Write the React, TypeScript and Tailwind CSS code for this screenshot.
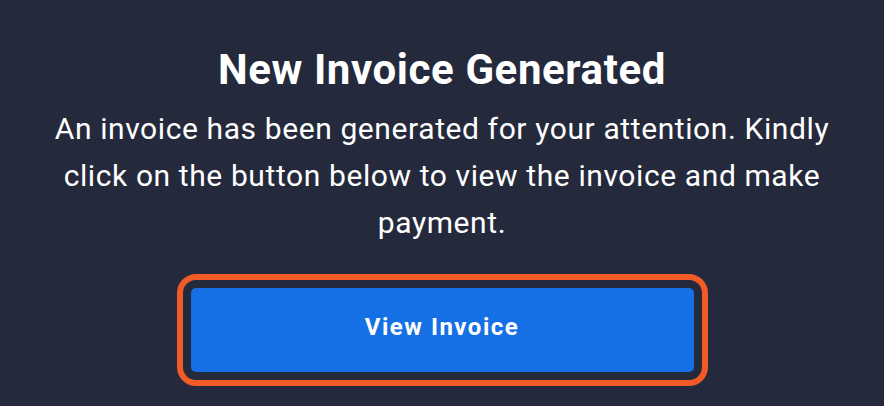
export default function App() {
  return (
    <div
      className="min-h-screen w-full bg-[#242a3c] flex flex-col items-center pt-[46px]"
      style={{ fontFamily: "Roboto, 'Liberation Sans', sans-serif" }}
    >
      {/* Heading */}
      <h1 className="text-[42px] leading-[48px] font-bold tracking-[0.6px] text-white">
        New Invoice Generated
      </h1>

      {/* Message */}
      <p className="mt-[11px] w-[820px] text-center text-[30px] leading-[47px] tracking-[0.6px] text-white">
        An invoice has been generated for your attention. Kindly click on the
        button below to view the invoice and make payment.
      </p>

      {/* CTA */}
      <button className="mt-[42px] w-[503px] h-[84px] pb-[6px] rounded-[5px] bg-[#1570e6] text-white text-[24px] font-bold tracking-[1.5px] outline-[6px] outline-solid outline-[#f25a27] outline-offset-[8px]">
        View Invoice
      </button>
    </div>
  );
}
